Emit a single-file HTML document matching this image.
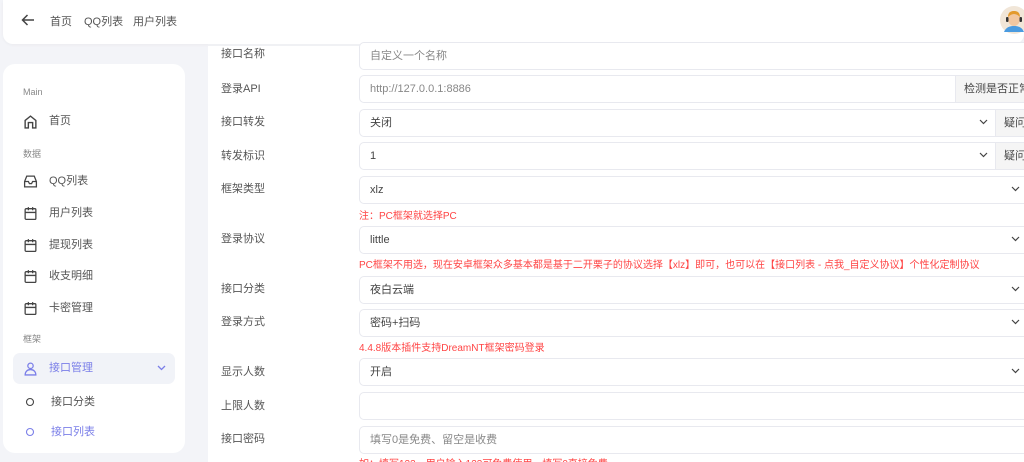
<!DOCTYPE html>
<html style="width:1024px;height:462px;overflow:hidden"><head><meta charset="utf-8"><style>
*{margin:0;padding:0;box-sizing:border-box}
body{width:1024px;height:462px;overflow:hidden;background:#f3f4f8;font-family:"Liberation Sans","Noto Sans CJK SC",sans-serif;position:relative;color:#555}
.hdr{position:absolute;left:3px;top:0;width:1021px;height:44px;background:#fff;border-radius:0 0 10px 10px;box-shadow:0 1px 3px rgba(0,0,0,.04)}
.hdr span{position:absolute;top:13px;font-size:11px;color:#555}
.side{position:absolute;left:3px;top:64px;width:182px;height:389px;background:#fff;border-radius:12px}
.sec{position:absolute;left:20px;font-size:9px;color:#888}
.it{position:absolute;left:20px;font-size:11px;color:#555;height:20px;line-height:20px}
.it svg{position:absolute;left:0;top:3px}
.it b{font-weight:normal;position:absolute;left:26px;white-space:nowrap}
.main{position:absolute;left:208px;top:44px;width:816px;height:418px;background:#fff}
.lb{position:absolute;left:221px;font-size:11px;color:#555}
.in{position:absolute;left:359px;width:665px;height:28px;border:1px solid #e8e9ef;border-right:none;border-radius:5px 0 0 5px;font-size:11px;color:#444;padding:0 10px;line-height:26px;background:#fff;overflow:hidden}
.ph{color:#888}
.ch{position:absolute;right:4px;top:9px}
.ad{position:absolute;top:0;height:26px;background:#f5f5f5;border-left:1px solid #e8e9ef;font-size:11px;color:#444;padding-left:8px;line-height:26px;white-space:nowrap;width:100px}
.nt{position:absolute;left:359px;font-size:10px;color:#f44;white-space:nowrap}
</style></head><body>
<div class="hdr">
<svg style="position:absolute;left:18px;top:14px" width="14" height="12" viewBox="0 0 14 12"><path d="M13 6H1.5M6.5 1L1.5 6l5 5" stroke="#444" stroke-width="1.5" fill="none"/></svg>
<span style="left:47px">首页</span><span style="left:81px">QQ列表</span><span style="left:130px">用户列表</span>
<svg style="position:absolute;left:997px;top:6px" width="28" height="28" viewBox="0 0 28 28"><circle cx="14" cy="14" r="14" fill="#f1e6d8"/><path d="M4 26c2-5 6-6 10-6s8 1 10 6z" fill="#4a9be0"/><ellipse cx="14" cy="13" rx="6" ry="7" fill="#f2c7a0"/><path d="M8 11c0-5 3-6 6-6s6 1 6 6c-2-2-4-3-6-3s-4 1-6 3z" fill="#e39a2d"/><rect x="6" y="11" width="2.5" height="5" rx="1" fill="#333"/><rect x="19.5" y="11" width="2.5" height="5" rx="1" fill="#333"/></svg>
</div>
<div class="side">
<div class="sec" style="top:23px">Main</div>
<div class="it" style="top:47px"><svg width="15" height="15" viewBox="0 0 14 14"><path d="M2 6l5-4 5 4v7H9V8H5v5H2z" stroke="#444" stroke-width="1.3" fill="none"/></svg><b>首页</b></div>
<div class="sec" style="top:83px">数据</div>
<div class="it" style="top:107px"><svg width="15" height="15" viewBox="0 0 14 14"><path d="M1.5 7l2-5h7l2 5v5h-11zM1.5 7h3.5l1 2h2l1-2h3.5" stroke="#444" stroke-width="1.2" fill="none"/></svg><b>QQ列表</b></div>
<div class="it" style="top:139px"><svg width="15" height="15" viewBox="0 0 14 14"><rect x="2" y="2.5" width="10" height="10" rx="1" stroke="#444" stroke-width="1.2" fill="none"/><path d="M2 6h10M5 1v3M9 1v3" stroke="#444" stroke-width="1.2"/></svg><b>用户列表</b></div>
<div class="it" style="top:171px"><svg width="15" height="15" viewBox="0 0 14 14"><rect x="2" y="2.5" width="10" height="10" rx="1" stroke="#444" stroke-width="1.2" fill="none"/><path d="M2 6h10M5 1v3M9 1v3" stroke="#444" stroke-width="1.2"/></svg><b>提现列表</b></div>
<div class="it" style="top:202px"><svg width="15" height="15" viewBox="0 0 14 14"><rect x="2" y="2.5" width="10" height="10" rx="1" stroke="#444" stroke-width="1.2" fill="none"/><path d="M2 6h10M5 1v3M9 1v3" stroke="#444" stroke-width="1.2"/></svg><b>收支明细</b></div>
<div class="it" style="top:234px"><svg width="15" height="15" viewBox="0 0 14 14"><rect x="2" y="2.5" width="10" height="10" rx="1" stroke="#444" stroke-width="1.2" fill="none"/><path d="M2 6h10M5 1v3M9 1v3" stroke="#444" stroke-width="1.2"/></svg><b>卡密管理</b></div>
<div class="sec" style="top:268px">框架</div>
<div style="position:absolute;left:10px;top:289px;width:162px;height:31px;background:#f1f3f8;border-radius:7px"></div>
<div class="it" style="top:294px;color:#7b7fe8"><svg width="15" height="15" viewBox="0 0 14 14"><circle cx="7" cy="4.5" r="2.5" stroke="#7b7fe8" stroke-width="1.2" fill="none"/><path d="M2 13c0-3 2-5 5-5s5 2 5 5z" stroke="#7b7fe8" stroke-width="1.2" fill="none"/></svg><b>接口管理</b></div>
<svg style="position:absolute;left:154px;top:301px" width="9" height="6" viewBox="0 0 9 6"><path d="M1 1l3.5 3.5L8 1" stroke="#7b7fe8" stroke-width="1.3" fill="none"/></svg>
<div class="it" style="top:328px"><svg width="14" height="14" viewBox="0 0 14 14"><circle cx="7" cy="7" r="3.5" stroke="#444" stroke-width="1.1" fill="none"/></svg><b style="left:28px">接口分类</b></div>
<div class="it" style="top:358px;color:#7b7fe8"><svg width="14" height="14" viewBox="0 0 14 14"><circle cx="7" cy="7" r="3.5" stroke="#7b7fe8" stroke-width="1.1" fill="none"/></svg><b style="left:28px">接口列表</b></div>
</div>
<div class="main"></div>
<div style="position:absolute;left:208px;top:44px;width:816px;height:2px;background:#f0f1f4"></div>

<div class="lb" style="top:45px">接口名称</div><div class="in ph" style="top:42px">自定义一个名称</div>
<div class="lb" style="top:80px">登录API</div><div class="in ph" style="top:75px">http://127.0.0.1:8886<div class="ad" style="left:595px">检测是否正常</div></div>
<div class="lb" style="top:113px">接口转发</div><div class="in" style="top:109px">关闭<svg class="ch" style="right:36px" width="9" height="6"><path d="M1 1l3.5 3.5L8 1" stroke="#444" stroke-width="1.2" fill="none"/></svg><div class="ad" style="left:635px">疑问</div></div>
<div class="lb" style="top:147px">转发标识</div><div class="in" style="top:142px">1<svg class="ch" style="right:36px" width="9" height="6"><path d="M1 1l3.5 3.5L8 1" stroke="#444" stroke-width="1.2" fill="none"/></svg><div class="ad" style="left:635px">疑问</div></div>
<div class="lb" style="top:180px">框架类型</div><div class="in" style="top:176px">xlz<svg class="ch" width="9" height="6"><path d="M1 1l3.5 3.5L8 1" stroke="#444" stroke-width="1.2" fill="none"/></svg></div>
<div class="nt" style="top:207px">注：PC框架就选择PC</div>
<div class="lb" style="top:230px">登录协议</div><div class="in" style="top:226px">little<svg class="ch" width="9" height="6"><path d="M1 1l3.5 3.5L8 1" stroke="#444" stroke-width="1.2" fill="none"/></svg></div>
<div class="nt" style="top:256px">PC框架不用选，现在安卓框架众多基本都是基于二开栗子的协议选择【xlz】即可，也可以在【接口列表 - 点我_自定义协议】个性化定制协议</div>
<div class="lb" style="top:280px">接口分类</div><div class="in" style="top:276px">夜白云端<svg class="ch" width="9" height="6"><path d="M1 1l3.5 3.5L8 1" stroke="#444" stroke-width="1.2" fill="none"/></svg></div>
<div class="lb" style="top:313px">登录方式</div><div class="in" style="top:309px">密码+扫码<svg class="ch" width="9" height="6"><path d="M1 1l3.5 3.5L8 1" stroke="#444" stroke-width="1.2" fill="none"/></svg></div>
<div class="nt" style="top:339px">4.4.8版本插件支持DreamNT框架密码登录</div>
<div class="lb" style="top:363px">显示人数</div><div class="in" style="top:358px">开启<svg class="ch" width="9" height="6"><path d="M1 1l3.5 3.5L8 1" stroke="#444" stroke-width="1.2" fill="none"/></svg></div>
<div class="lb" style="top:397px">上限人数</div><div class="in" style="top:392px"></div>
<div class="lb" style="top:430px">接口密码</div><div class="in ph" style="top:426px">填写0是免费、留空是收费</div>
<div class="nt" style="top:455px;height:7px;overflow:hidden">如：填写123，用户输入123可免费使用，填写0直接免费</div>
</body></html>
